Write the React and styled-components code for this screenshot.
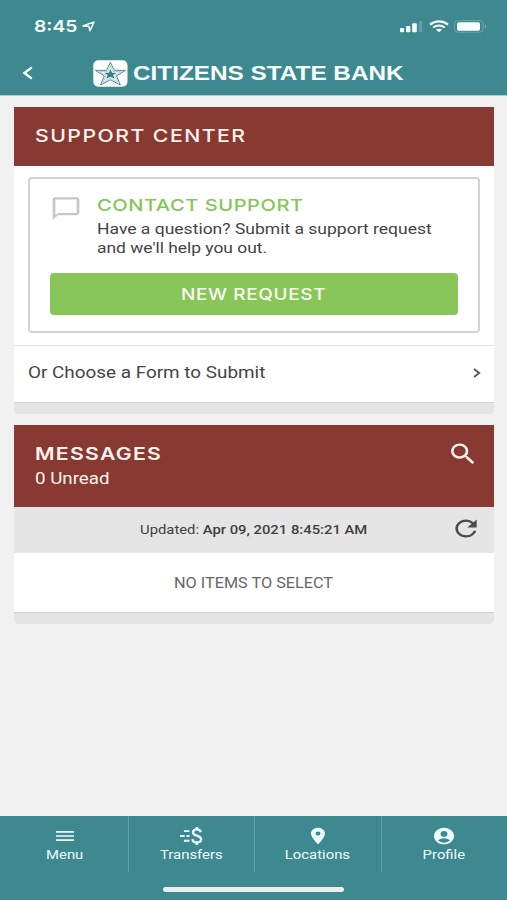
import React from 'react';
import styled, { createGlobalStyle } from 'styled-components';
import { MdSearch, MdRefresh, MdMenu, MdPlace, MdAccountCircle, MdChatBubbleOutline } from 'react-icons/md';

function TransferIcon() {
    return (
        <svg width="22" height="18" viewBox="0 0 22 18" fill="none" stroke="currentColor">
            <path d="M4.5 4.5H9.6M1 9H5.2M6.8 9H9.6M4.5 13.4H9.6" strokeWidth="1.7" />
            <path d="M20 5.6C19.6 3.8 18.2 3 16.4 3C14.2 3 12.8 4.1 12.8 5.7C12.8 9.3 20.3 7.9 20.3 12C20.3 13.8 18.7 14.9 16.5 14.9C14.2 14.9 12.5 13.8 12.3 11.8" strokeWidth="2.1" />
            <path d="M16.4 .8V3.2M16.4 14.8V17.2" strokeWidth="2.3" />
        </svg>
    )
}

function StatusBar() {
    return (
        <Status>
            <Clock>
                <Text $size={16.2} $weight={600} $stretch={1.19} $family="Inter">8:45</Text>
            </Clock>
            <svg width="13" height="11" viewBox="0 0 13 11" fill="none" stroke="currentColor" strokeWidth="1.5" strokeLinejoin="round">
                <path d="M1 5L12 .9L8 9.8L6.8 5.2Z" />
            </svg>
            <StatusIcons>
                <svg width="23" height="13" viewBox="0 0 23 13" fill="currentColor">
                    <rect x="0" y="8" width="4.2" height="4.2" rx="1" />
                    <rect x="6" y="6" width="4.4" height="6.2" rx="1" />
                    <rect x="12.2" y="3.2" width="4.6" height="9" rx="1" />
                    <rect x="18.6" y="1" width="3.8" height="11.2" rx="1" opacity=".2" />
                </svg>
                <svg width="20" height="13" viewBox="0 0 20 13" fill="none" stroke="currentColor">
                    <path d="M1 4.6C6 .2 14 .2 19 4.6" strokeWidth="2.2" />
                    <path d="M4.2 7.6C7.6 4.8 12.4 4.8 15.8 7.6" strokeWidth="2" />
                    <path d="M6.9 9.6C8.8 8.3 11.2 8.3 13.1 9.6L10 12.2Z" fill="currentColor" stroke="none" />
                </svg>
                <svg width="33" height="13" viewBox="0 0 33 13" fill="none">
                    <rect x=".6" y=".6" width="28.6" height="11.6" rx="3.4" stroke="currentColor" opacity=".25" />
                    <rect x="3" y="2.3" width="23" height="8.4" rx="1.6" fill="currentColor" />
                    <path d="M30.8 4.2Q33 6.4 30.8 8.6Z" fill="currentColor" opacity=".4" />
                </svg>
            </StatusIcons>
        </Status>
    )
}

function Logo() {
    return (
        <svg width="35" height="27" viewBox="0 0 35 27">
            <rect x=".3" y=".3" width="34.2" height="26.4" rx="5" fill="#fdffff" />
            <g fill="none" stroke="#4b8c95" strokeLinejoin="miter">
                <path d="M17.4 2.4L21.2 10.3L32.4 10.4L23.5 15.9L27.3 25L17.4 19.8L7.5 25L11.3 15.9L2.4 10.4L13.6 10.3Z" strokeWidth="1" />
                <path d="M17.4 5.4L20.1 11.5L28.4 11.6L21.9 15.4L24.6 22.2L17.4 18.3L10.2 22.2L12.9 15.4L6.4 11.6L14.7 11.5Z" strokeWidth=".4" />
            </g>
            <path d="M17.4 9L19 12.7L23.8 12.8L20.2 15.1L21.5 18.8L17.4 16.7L13.3 18.8L14.6 15.1L11 12.8L15.8 12.7Z" fill="#347f89" />
        </svg>
    )
}

const tabs = [
    { name: 'Menu', icon: <MdMenu preserveAspectRatio="none" /> },
    { name: 'Transfers', icon: <TransferIcon /> },
    { name: 'Locations', icon: <MdPlace preserveAspectRatio="none" /> },
    { name: 'Profile', icon: <MdAccountCircle preserveAspectRatio="none" /> },
]

function App() {
    return (
        <Screen>
            <GlobalStyle />
            <Header>
                <StatusBar />
                <TitleBar>
                    <BackButton aria-label="Back">
                        <svg width="11" height="14" viewBox="0 0 11 14" fill="none" stroke="currentColor" strokeWidth="2.4">
                            <path d="M9.8 1.4L2.4 7L9.8 12.6" />
                        </svg>
                    </BackButton>
                    <Logo />
                    <BankName $size={19.7} $weight={700} $stretch={1.235} $family="'Liberation Sans'">CITIZENS STATE BANK</BankName>
                </TitleBar>
            </Header>
            <Content>
                <Card>
                    <CardHeader $height={59}>
                        <Heading>SUPPORT CENTER</Heading>
                    </CardHeader>
                    <ContactArea>
                        <ContactBox>
                            <ContactInfo>
                                <ChatIcon preserveAspectRatio="none" />
                                <div>
                                    <ContactTitle>CONTACT SUPPORT</ContactTitle>
                                    <Paragraph>
                                        <Text $size={15} $stretch={1.167}>Have a question? Submit a support request</Text>
                                        <Text $size={15} $stretch={1.16}>and we'll help you out.</Text>
                                    </Paragraph>
                                </div>
                            </ContactInfo>
                            <RequestButton>
                                <Text $size={15.5} $weight={500} $stretch={1.22} $spacing={0.55} $family="Inter" $center>NEW REQUEST</Text>
                            </RequestButton>
                        </ContactBox>
                    </ContactArea>
                    <FormRow>
                        <Text $size={16} $stretch={1.18}>Or Choose a Form to Submit</Text>
                        <svg width="8" height="10" viewBox="0 0 8 10" fill="none" stroke="#555" strokeWidth="1.8">
                            <path d="M1 1L6.2 5L1 9" />
                        </svg>
                    </FormRow>
                    <CardFooter />
                </Card>
                <Card>
                    <CardHeader $height={82}>
                        <div>
                            <Heading $bold>MESSAGES</Heading>
                            <Unread $size={16} $stretch={1.17}>0 Unread</Unread>
                        </div>
                        <SearchIcon preserveAspectRatio="none" />
                    </CardHeader>
                    <UpdatedBar>
                        <Text $size={13} $stretch={1.14} $center>Updated: <b>Apr 09, 2021 8:45:21 AM</b></Text>
                        <RefreshIcon preserveAspectRatio="none" />
                    </UpdatedBar>
                    <EmptyRow>
                        <Text $size={14} $stretch={1.16} $center>NO ITEMS TO SELECT</Text>
                    </EmptyRow>
                    <CardFooter />
                </Card>
            </Content>
            <Footer>
                <Tabs>
                    {tabs.map((tab) => (
                        <Tab key={tab.name}>
                            <TabIcon>{tab.icon}</TabIcon>
                            <Text $size={12.5} $stretch={1.19} $center>{tab.name}</Text>
                        </Tab>
                    ))}
                </Tabs>
                <HomeIndicator />
            </Footer>
        </Screen>
    )
}

export default App;

const GlobalStyle = createGlobalStyle`
    * {
        box-sizing: border-box;
    }
    body {
        margin: 0;
        font-family: Roboto, sans-serif;
    }
    svg {
        display: block;
        flex-shrink: 0;
    }
`

// wide lettering, stretched from the left edge or from the middle
const Text = styled.span`
    display: block;
    white-space: nowrap;
    font-family: ${props => props.$family || 'Roboto'}, sans-serif;
    font-size: ${props => props.$size}px;
    font-weight: ${props => props.$weight || 400};
    letter-spacing: ${props => props.$spacing || 0}px;
    transform: scaleX(${props => props.$stretch});
    transform-origin: ${props => props.$center ? 'center' : 'left'};
`

const Screen = styled.div`
    width: 507px;
    height: 900px;
    display: flex;
    flex-direction: column;
    overflow: hidden;
    background: #f1f1f1;
    color: #444;
`

const Header = styled.header`
    height: 96px;
    background: #3e888f;
    border-bottom: 1px solid #a5d3d7;
    color: #f7ffff;
`
const Status = styled.div`
    display: flex;
    align-items: center;
    height: 52px;
    padding: 0 20px 0 34px;
`
const Clock = styled.div`
    width: 48px;
`
const StatusIcons = styled.div`
    display: flex;
    align-items: center;
    gap: 5.5px;
    margin-left: auto;
`
const TitleBar = styled.div`
    display: flex;
    align-items: center;
    height: 42px;
    padding-left: 22px;
`
const BackButton = styled.button`
    width: 71px;
    padding: 0;
    border: 0;
    background: none;
    color: inherit;
`
const BankName = styled(Text)`
    margin-left: 5px;
`

const Content = styled.main`
    flex: 1;
    display: flex;
    flex-direction: column;
    gap: 11px;
    padding: 10.5px 13.5px 0 14px;
`
const Card = styled.section`
    background: #fff;
    border-radius: 0 0 4px 4px;
    overflow: hidden;
`
const CardHeader = styled.div`
    display: flex;
    justify-content: space-between;
    height: ${props => props.$height}px;
    padding: 18px 15px 0 21px;
    background: #873932;
    color: #fff3ee;
`
const Heading = styled(Text).attrs({ as: 'h2', $size: 17.4, $stretch: 1.22, $family: 'Inter' })`
    margin: 0;
    line-height: 22px;
    font-weight: ${props => props.$bold ? 600 : 500};
    letter-spacing: ${props => props.$bold ? 1.05 : 1.2}px;
`
const Unread = styled(Text)`
    line-height: 20px;
    margin-top: 4px;
`
const SearchIcon = styled(MdSearch)`
    width: 32px;
    height: 28px;
    margin-top: -3px;
`

const ContactArea = styled.div`
    padding: 11.5px 13.5px 12px 14px;
    border-bottom: 1px solid #e6e6e6;
`
const ContactBox = styled.div`
    height: 156px;
    padding: 16px 20px 0;
    border: 2px solid #d3d3d3;
    border-radius: 4px;
`
const ContactInfo = styled.div`
    display: flex;
    gap: 15px;
    height: 78px;
`
const ChatIcon = styled(MdChatBubbleOutline)`
    width: 32px;
    height: 27px;
    color: #c6c6c6;
`
const ContactTitle = styled(Text).attrs({ as: 'h3', $size: 16.5, $stretch: 1.22, $spacing: 0.42, $family: 'Inter' })`
    margin: 0;
    line-height: 21px;
    font-weight: 500;
    color: #86c659;
`
const Paragraph = styled.div`
    line-height: 19px;
    margin-top: 4px;
`
const RequestButton = styled.button`
    display: flex;
    align-items: center;
    justify-content: center;
    width: 100%;
    height: 42px;
    border: 0;
    border-radius: 4px;
    background: #89c65a;
    color: #fbfff4;
`
const FormRow = styled.div`
    display: flex;
    align-items: center;
    justify-content: space-between;
    height: 56px;
    padding: 0 13px 3px 14px;

    span {
        margin-top: -1px;
    }
`
const CardFooter = styled.div`
    height: 12px;
    background: #e4e4e4;
    border-top: 1px solid #d2d2d2;
`

const UpdatedBar = styled.div`
    display: grid;
    grid-template-columns: 48px 1fr 48px;
    align-items: center;
    justify-items: center;
    height: 45.5px;
    padding-bottom: 1px;
    background: #e5e5e5;
    color: #3f3f3f;

    span {
        grid-column: 2;
    }
    b {
        font-weight: 500;
    }
`
const RefreshIcon = styled(MdRefresh)`
    width: 32px;
    height: 27px;
    margin: 0 7px 2px 0;
    color: #4c4c4c;
`
const EmptyRow = styled.div`
    display: flex;
    align-items: center;
    justify-content: center;
    height: 59px;
    padding-top: 2px;
    color: #666;
`

const Footer = styled.footer`
    display: flex;
    flex-direction: column;
    align-items: center;
    height: 84px;
    background: #3e888f;
    color: #eafcfd;
`
const Tabs = styled.nav`
    display: grid;
    grid-template-columns: repeat(4, 1fr);
    width: 100%;
    height: 56px;
    padding-left: 1px;
`
const Tab = styled.a`
    display: flex;
    flex-direction: column;
    align-items: center;
    padding-top: 9px;
    border-left: 1px solid #5da3a9;
    line-height: 16px;

    &:first-child {
        border-left-color: transparent;
    }
`
const TabIcon = styled.div`
    display: flex;
    align-items: center;
    height: 22px;

    svg {
        width: 24px;
        height: 20px;
    }
`
const HomeIndicator = styled.div`
    width: 181px;
    height: 5px;
    margin-top: 15px;
    border-radius: 3px;
    background: #e9eeee;
`
